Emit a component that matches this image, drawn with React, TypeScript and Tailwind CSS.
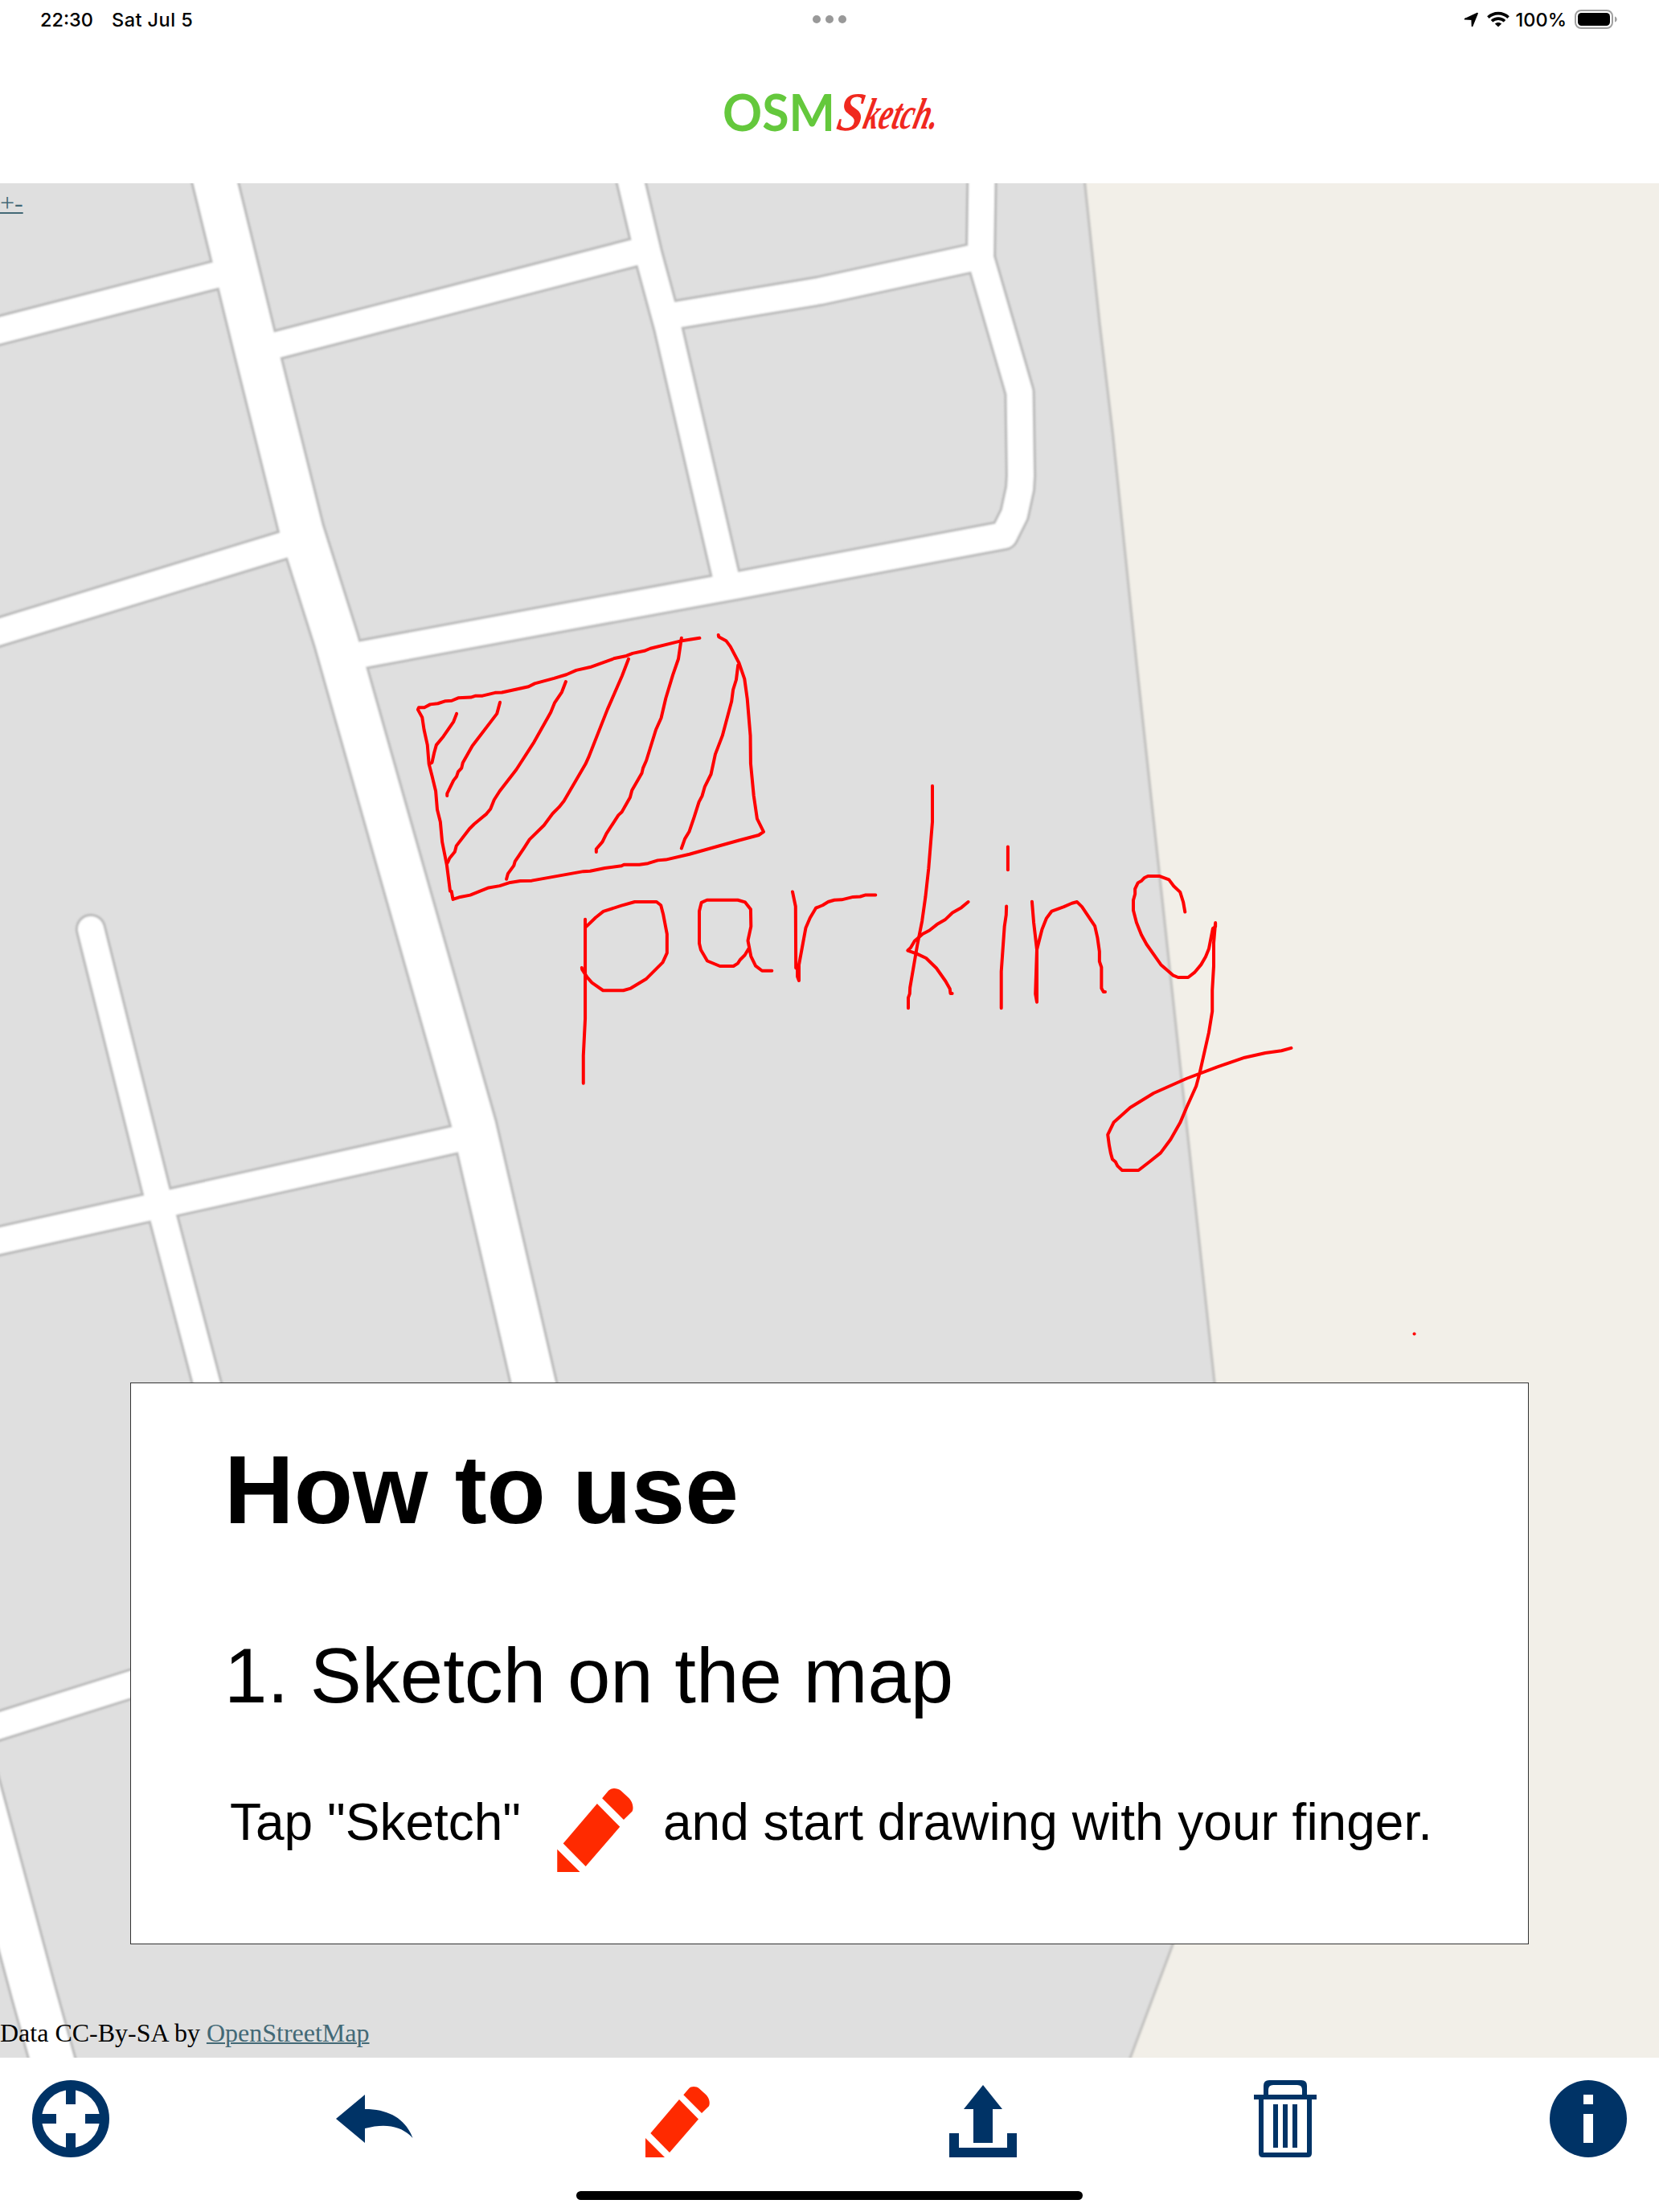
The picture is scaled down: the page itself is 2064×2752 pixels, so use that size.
import type { ReactNode } from "react";

const minorRoads = [
  "M-20 416 L265 343 L300 334",
  "M-20 792 L350 679 L376 671",
  "M318 436 L786 315 L803 311",
  "M784 222 L806 315 L831 407 L902 713 L905 728",
  "M832 393 L846 391 L1020 362 L1205 322 L1220 318",
  "M1221.5 220 L1220 321 L1268.5 488 L1270 592 L1269 608 L1262 640 L1249 666 L919 728 L700 768 L430 818",
  "M-20 1548 L565 1418 L590 1412",
  "M113 1156 L194 1480 L261 1735",
  "M-20 2153 L180 2090",
];

const mainRoads = [
  "M265 216 L320 440 L375 660 L418 796 L498.5 1080 L590 1402 L668 1738",
  "M-60 2102 L42 2480 L70 2580",
];

// outline and hatching of the parking lot, then "par"
const inkLeft = [
  "M968 62 L910 71 L808 96 L788 104 L750 112 L730 120 L692 128 L612 157 L567 167 L535 181 L495 193 L432 210 L412 220 L325 239 L303 240 L262 250 L240 250 L224 255 L183 257 L162 266 L142 267 L117 275 L92 278 L73 288 L55 288 L52 295 L66 320 L72 360 L83 410 L88 472 L98 510 L110 560 L115 620 L125 660 L131 725 L146 800 L157 885 L161 885 L166 912 L190 904 L222 898 L282 874 L318 868 L352 857 L385 852 L422 851 L590 821 L612 820 L660 810 L714 803 L722 799 L772 799 L800 795 L832 785 L858 783 L935 765 L1035 737 L1096 720 L1160 703 L1176 692 L1155 650 L1144 575 L1134 470 L1133 380 L1123 260 L1114 195 L1096 143 L1068 90 L1054 71 L1030 58 L1029 52",
  "M178 308 L168 334 L135 382 L112 410 L105 435 L98 467 L92 470",
  "M319 271 L309 308 L229 413 L198 468 L194 485 L183 497 L178 512 L168 525 L147 568 L147 575",
  "M533 204 L520 238 L497 272 L484 304 L430 400 L372 490 L318 560 L300 588 L288 618 L275 634 L235 667 L220 682 L177 738 L172 757 L155 778 L149 792",
  "M737 130 L716 185 L668 295 L607 450 L597 472 L527 592 L511 612 L490 633 L462 671 L415 717 L397 745 L368 788 L364 802 L345 828 L340 846",
  "M909 62 L899 130 L881 182 L858 258 L843 322 L826 360 L795 460 L784 485 L780 502 L748 557 L742 580 L715 628 L704 638 L665 698 L652 725 L632 748 L632 758",
  "M1093 150 L1087 198 L1077 230 L1072 268 L1042 380 L1019 440 L1005 505 L985 545 L976 576 L966 595 L950 645 L934 692 L920 715 L909 746",
  "M596 977 L596 1300 L590 1420 L590 1510",
  "M600 1000 L630 971 L655 951 L714 932 L757 920 L828 920 L842 931 L850 962 L862 1025 L862 1086 L848 1117 L795 1170 L744 1201 L720 1208 L654 1208 L618 1183 L603 1166 L586 1140 L585 1134",
  "M1125 1046 L1135 1000 L1134 944 L1116 921 L1092 914 L992 914 L974 922 L967 950 L967 1055 L972 1076 L993 1112 L1034 1129 L1078 1129 L1092 1120 L1100 1108 L1115 1093 L1127 1073 M1125 1046 L1135 1097 L1150 1128 L1171 1144 L1203 1144",
  "M1270 887 L1280 935 L1281 1135 L1286 1138 L1286 1163 L1291 1176 L1291 1125 L1313 1005 L1327 972 L1346 940 L1368 931 L1386 920 L1406 914 L1430 913 L1467 904 L1490 903 L1506 898 L1540 898",
];

// "king"
const inkRight = [
  "M224 82 L224 215 L211 385 L200 490 L188 580 L172 665 L146 825 L145 847 L140 862 L140 900",
  "M349 509 L325 530 L294 549 L268 575 L240 592 L214 614 L190 627 L162 653 L148 678 L138 688 L170 700 L202 716 L238 753 L270 801 L285 829 L287 846 L293 846",
  "M487 306 L487 391",
  "M482 525 L481 557 L475 600 L464 765 L464 900",
  "M571 508 L577 585 L588 685 L583 848 L588 878 L588 685 L606 610 L621 570 L640 543 L682 527 L710 514 L728 509 L745 527 L790 598 L799 640 L806 692 L806 728 L813 750 L813 827 L820 840 L826 840",
  "M1104 546 L1098 510 L1087 473 L1065 451 L1048 427 L1014 414 L975 414 L963 420 L953 431 L940 439 L930 461 L930 480 L924 503 L924 540 L935 585 L952 630 L970 665 L1020 740 L1062 779 L1080 787 L1115 787 L1137 769 L1160 740 L1176 711 L1187 682 L1201 607 L1210 600 L1210 586 L1204 660 L1204 745 L1199 835 L1199 912 L1187 990 L1155 1140 L1143 1187 L1109 1267 L1087 1322 L1054 1383 L1019 1433 L980 1466 L942 1497 L885 1497 L869 1481 L862 1466 L851 1456 L845 1433 L840 1405 L835 1366 L856 1320 L913 1266 L995 1213 L1110 1159 L1215 1117 L1312 1082 L1384 1065 L1440 1057 L1474 1047",
];

const PencilShape = () => (
  <g fill="#ff2a00">
    <path d="M0 64 V88 H24 Z" />
    <path d="M42 16 L66 40.5 L30 82 L6.3 58 Z" />
    <path d="M47.3 10.3 L54 2.4 C57 -0.8 63 -0.8 67 2.4 L75 9.8 C79 13.5 81 20 79 24.2 L70 33 Z" />
  </g>
);

const ToolButton = ({ label, className = "", children }: { label: string; className?: string; children: ReactNode }) => (
  <button aria-label={label} className={`h-24 w-24 shrink-0 ${className}`}>
    <svg viewBox="0 0 96 96" className="block h-24 w-24" fill="#003366">
      {children}
    </svg>
  </button>
);

const StatusBar = () => (
  <div className="grid h-12 grid-cols-3 items-center pl-[50px] pr-[50px] font-['Inter',sans-serif] text-[23.5px] font-medium leading-none text-black">
    <div className="flex gap-[23px] pt-px">
      <span>22:30</span>
      <span className="tracking-[0.45px]">Sat Jul 5</span>
    </div>
    <div className="flex justify-center gap-1.5">
      <span className="h-2.5 w-2.5 rounded-full bg-[#999999]" />
      <span className="h-2.5 w-2.5 rounded-full bg-[#999999]" />
      <span className="h-2.5 w-2.5 rounded-full bg-[#999999]" />
    </div>
    <div className="flex items-center justify-end">
      <svg viewBox="0 0 19 19" className="mr-2.5 h-[19px] w-[19px]">
        <path
          d="M17 1.6 L10.6 17.4 L10.3 9 L1.6 8.7 Z"
          stroke="#000"
          strokeWidth="1.8"
          strokeLinejoin="round"
        />
      </svg>
      <svg viewBox="0 0 28 20" className="mr-2 h-5 w-7" fill="none" stroke="#000" strokeWidth="3.6">
        <path d="M1.4 7.6 C8.4 0.9 19.6 0.9 26.6 7.6" />
        <path d="M6 12.3 C10.5 8.1 17.5 8.1 22 12.3" />
        <path d="M14 19.6 L9.8 15.6 C12.1 13.5 15.9 13.5 18.2 15.6 Z" fill="#000" stroke="none" />
      </svg>
      <span className="mr-2.5 pt-px">100%</span>
      <svg viewBox="0 0 55 24" className="h-6 w-[55px]">
        <rect x="1" y="1" width="46" height="22" rx="7" fill="none" stroke="#a0a0a0" strokeWidth="2" />
        <rect x="4" y="4" width="40" height="16" rx="4.5" />
        <path d="M50 8.4 C53.6 9.6 53.6 14.4 50 15.6 Z" fill="#a0a0a0" />
      </svg>
    </div>
  </div>
);

const Logo = () => (
  <svg viewBox="0 -20 280 100" className="h-[100px] w-[280px]">
    <text x="7" y="55" fontFamily="Lato, sans-serif" fontWeight="700" fontSize="64" fill="#64c83c" textLength="140" lengthAdjust="spacingAndGlyphs">
      OSM
    </text>
    <g fontFamily="Liberation Serif, serif" fontStyle="italic" fontWeight="700" fill="#f0281e">
      <text transform="translate(147 54) skewX(-10)" fontSize="68" textLength="33" lengthAdjust="spacingAndGlyphs">S</text>
      <text transform="translate(180 52) skewX(-14)" fontSize="55" textLength="92" lengthAdjust="spacingAndGlyphs">ketch.</text>
    </g>
  </svg>
);

const MapCanvas = () => (
  <svg viewBox="0 228 2064 2332" className="absolute inset-0 h-full w-full">
    <defs>
      <filter id="soft" filterUnits="userSpaceOnUse" x="-20" y="200" width="2110" height="2400">
        <feGaussianBlur stdDeviation="1.2" />
      </filter>
    </defs>
    <rect x="0" y="228" width="2064" height="2332" fill="#dfdfdf" />
    <g filter="url(#soft)" fill="none" strokeLinejoin="round">
      <path
        d="M1349 222 L1368 402 L1384 536 L1414 825 L1449.6 1153 L1511 1720 L1560 2150 L1398 2582 L2120 2582 L2120 190 L1349 190 Z"
        fill="#f2efe8"
        stroke="#c5c4c2"
        strokeWidth="3.5"
      />
      <g stroke="#bcbcbc" strokeWidth="38.5" strokeLinecap="round">
        {minorRoads.map((d) => <path key={d} d={d} />)}
      </g>
      <g stroke="#bcbcbc" strokeWidth="59.5">
        {mainRoads.map((d) => <path key={d} d={d} />)}
      </g>
      <g stroke="#ffffff" strokeWidth="32" strokeLinecap="round">
        {minorRoads.map((d) => <path key={d} d={d} />)}
      </g>
      <g stroke="#ffffff" strokeWidth="53">
        {mainRoads.map((d) => <path key={d} d={d} />)}
      </g>
    </g>
    <g fill="none" stroke="#ff0000" strokeWidth="4" strokeLinecap="round" strokeLinejoin="round">
      <g transform="translate(500 770) scale(0.38265)">
        {inkLeft.map((d) => <path key={d} d={d} vectorEffect="non-scaling-stroke" />)}
      </g>
      <g transform="translate(1080 950) scale(0.35714 0.33801)">
        {inkRight.map((d) => <path key={d} d={d} vectorEffect="non-scaling-stroke" />)}
      </g>
      <path d="M1759.5 1659.5 h0.1" />
    </g>
  </svg>
);

const HowToCard = () => (
  <div className="relative mx-[162px] mt-[1450px] h-[699px] border border-[#333333] bg-white pl-[116px] pt-[63px] font-['Liberation_Sans',Arial,sans-serif] text-black">
    <h1 className="text-[120px] font-bold leading-[138px]">How to use</h1>
    <h2 className="mt-[108px] text-[96px] leading-[110px]">1. Sketch on the map</h2>
    <div className="mt-[85px] flex items-start whitespace-nowrap pl-[7px] text-[64px] leading-[74px]">
      <span className="w-[407px] pt-[5px]">Tap "Sketch"</span>
      <svg viewBox="0 0 80 88" className="mr-[37px] h-[104px] w-[95px]">
        <PencilShape />
      </svg>
      <span className="pt-[5px]">and start drawing with your finger.</span>
    </div>
  </div>
);

const Toolbar = () => (
  <nav className="h-[192px] bg-white">
    <div className="flex gap-[282px] px-10 pt-7">
      <ToolButton label="Locate">
        <circle cx="48" cy="48" r="42" fill="none" stroke="#003366" strokeWidth="12" />
        <path d="M42 6 h12 v24 h-12 Z M42 66 h12 v24 h-12 Z M6 42 h24 v12 h-24 Z M66 42 h24 v12 h-24 Z" />
      </ToolButton>
      <ToolButton label="Undo">
        <path d="M0 48 L36 18 V36 C67 36 87 49 95.5 72 C82 57 62 53 36 60 V78 Z" />
      </ToolButton>
      <ToolButton label="Sketch">
        <g transform="translate(7 8)">
          <PencilShape />
        </g>
      </ToolButton>
      <ToolButton label="Share">
        <path d="M49 6 L73 36 H61 V78 H37 V36 H25 Z" />
        <path d="M7 66 H19 V84 H79 V66 H91 V96 H7 Z" />
      </ToolButton>
      <ToolButton label="Delete">
        <path d="M8 18 H86 V24 H80 V91 Q80 96 75 96 H19 Q14 96 14 91 V24 H8 Z M20 24 V90 H74 V24 Z" fillRule="evenodd" />
        <path d="M20 18 V7 Q20 0 27 0 H67 Q74 0 74 7 V18 H68 V12 Q68 6 62 6 H32 Q26 6 26 12 V18 Z" />
        <path d="M32 30 h6 v54 h-6 Z M44 30 h6 v54 h-6 Z M56 30 h6 v54 h-6 Z" />
      </ToolButton>
      <ToolButton label="Info" className="-ml-0.5">
        <circle cx="48" cy="48" r="48" />
        <path d="M42 18 h12 v12 h-12 Z M42 42 h12 v36 h-12 Z" fill="#ffffff" />
      </ToolButton>
    </div>
    <div className="mx-auto mt-[42px] h-[11px] w-[630px] rounded-full bg-black" />
  </nav>
);

const App = () => {
  return (
    <div className="h-[2752px] w-[2064px] overflow-hidden bg-white">
      <header className="h-[228px]">
        <StatusBar />
        <div className="flex justify-center pt-10">
          <Logo />
        </div>
      </header>
      <main className="relative flex h-[2332px] flex-col overflow-hidden">
        <MapCanvas />
        <p className="relative mt-1.5 h-9 font-['Liberation_Serif','Times_New_Roman',serif] text-[32px] leading-9 text-[#436976]">
          <a className="underline decoration-2">+-</a>
        </p>
        <HowToCard />
        <p className="relative mt-[92px] font-['Liberation_Serif','Times_New_Roman',serif] text-[32px] leading-9 text-black">
          Data CC-By-SA by <a className="text-[#436976] underline decoration-2">OpenStreetMap</a>
        </p>
      </main>
      <Toolbar />
    </div>
  );
};

export default App;
